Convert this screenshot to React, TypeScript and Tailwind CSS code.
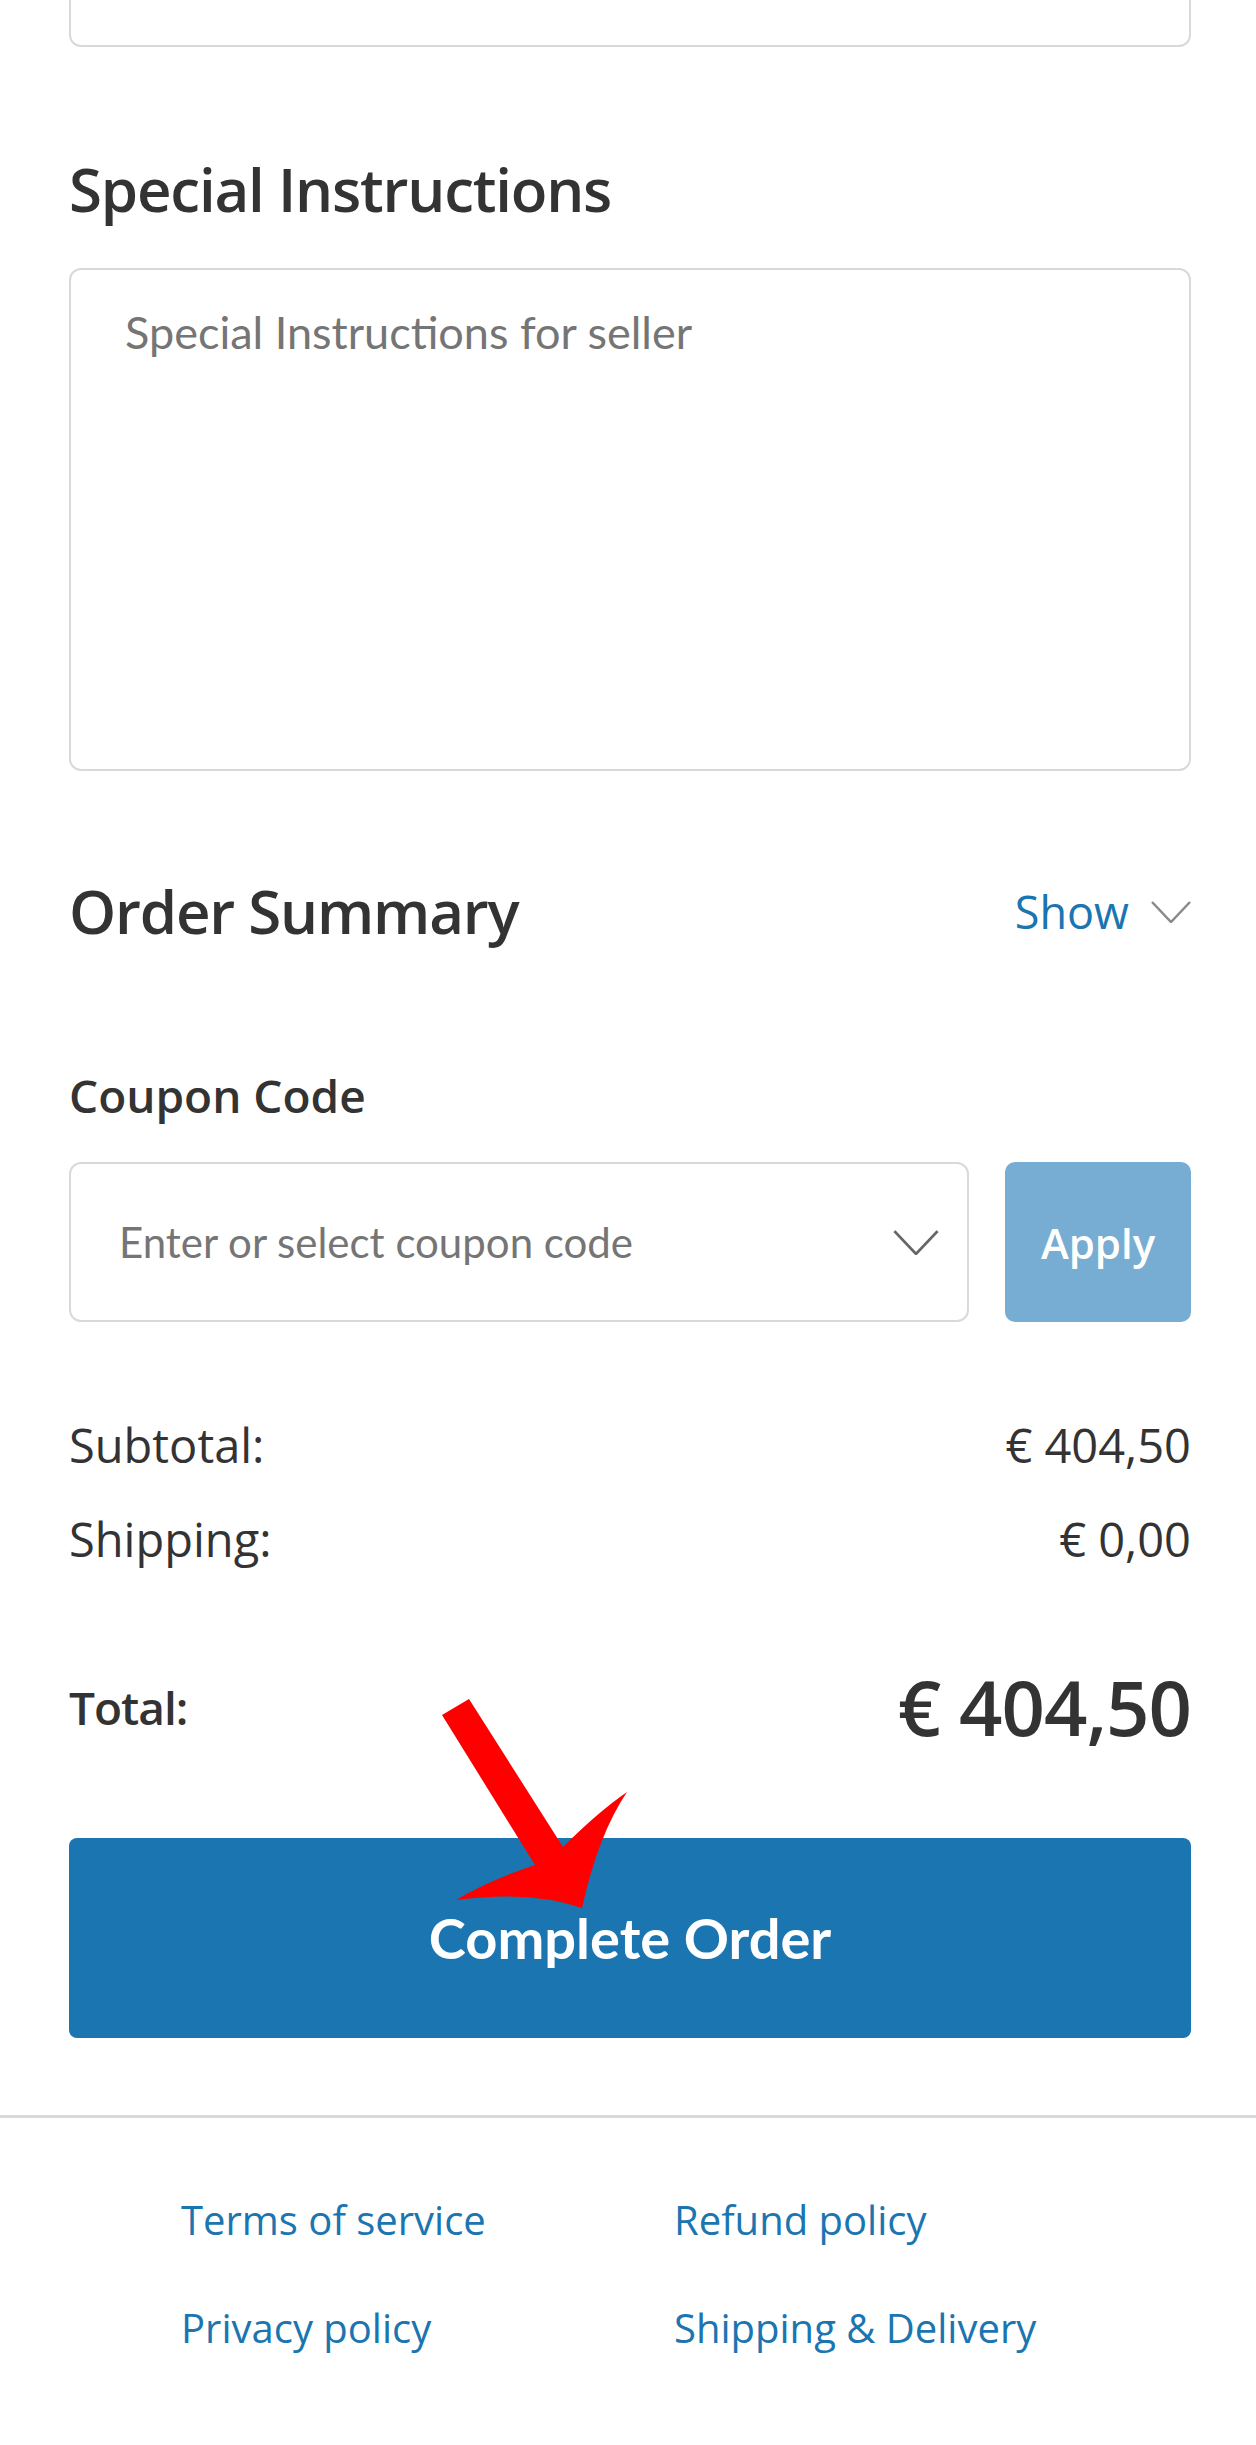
import { useState } from "react"

const FOOTER_LINKS = [
  ["Terms of service", "Refund policy"],
  ["Privacy policy", "Shipping & Delivery"],
]

function Chevron({ className }: { className?: string }) {
  return (
    <svg viewBox="0 0 40 22" fill="none" className={className} aria-hidden>
      <path d="M1 1 L20 21 L39 1" stroke="currentColor" strokeWidth="2.5" />
    </svg>
  )
}

export default function App() {
  const [notes, setNotes] = useState("")
  const [coupon, setCoupon] = useState("")

  return (
    <div className="relative min-h-[2445px] bg-white font-['Open_Sans',sans-serif] text-[#333333]">
      <div className="pl-[69px] pr-[65px]">
        {/* tail of the previous field */}
        <div className="h-[47px] rounded-b-[12px] border-2 border-t-0 border-[#d9d9d9]" />

        <h2 className="mt-[105px] text-[60px] font-semibold leading-[75px] tracking-[-1.2px]">
          Special Instructions
        </h2>
        <textarea
          value={notes}
          onChange={(e) => setNotes(e.target.value)}
          placeholder="Special Instructions for seller"
          className="mt-[41px] block h-[503px] w-full resize-none rounded-[12px] border-2 border-[#d9d9d9] px-[54px] pt-[33px] font-['Lato',sans-serif] text-[45px] leading-[58px] outline-none placeholder:text-[#757575]"
        />

        <div className="mt-[103px] flex items-center justify-between">
          <h2 className="text-[60px] font-semibold leading-[75px] tracking-[-1.2px]">Order Summary</h2>
          <button className="flex items-center gap-[22px] text-[45px] text-[#1a75b0]">
            Show
            <Chevron className="h-[22px] w-[40px] text-[#8a8a8a]" />
          </button>
        </div>

        <label className="mt-[117px] block text-[46px] font-semibold leading-[58px]">Coupon Code</label>
        <div className="mt-[38px] flex h-[160px] gap-[36px]">
          <div className="relative flex flex-1 items-center rounded-[12px] border-2 border-[#d9d9d9]">
            <input
              value={coupon}
              onChange={(e) => setCoupon(e.target.value)}
              placeholder="Enter or select coupon code"
              className="h-full w-full bg-transparent pl-[48px] pr-[90px] font-['Lato',sans-serif] text-[42px] outline-none placeholder:text-[#757575]"
            />
            <Chevron className="absolute right-[28px] h-[25px] w-[46px] text-[#666666]" />
          </div>
          <button className="w-[186px] rounded-[10px] bg-[#77acd3] text-[42px] font-semibold text-white">
            Apply
          </button>
        </div>

        <div className="mt-[76px] flex h-[94px] items-center justify-between text-[47px]">
          <span>Subtotal:</span>
          <span>€ 404,50</span>
        </div>
        <div className="flex h-[94px] items-center justify-between text-[47px]">
          <span>Shipping:</span>
          <span>€ 0,00</span>
        </div>

        <div className="mt-[74px] flex h-[94px] items-center justify-between">
          <span className="text-[46px] font-semibold tracking-[-1px]">Total:</span>
          <span className="text-[76px] font-semibold tracking-[-1px]">€ 404,50</span>
        </div>

        <button className="mt-[84px] flex h-[200px] w-full items-center justify-center rounded-[8px] bg-[#1a75b1] font-['Lato',sans-serif] text-[56px] font-bold text-white">
          Complete Order
        </button>
      </div>

      <div className="mt-[77px] h-[3px] bg-[#d9d9d9]" />

      <div className="mt-[48px] grid grid-cols-[493px_1fr] pl-[181px] text-[40px] text-[#1a75b0]">
        {FOOTER_LINKS.flat().map((l) => (
          <a key={l} href="#" className="flex h-[108px] items-center">
            {l}
          </a>
        ))}
      </div>

      {/* annotation arrow */}
      <svg className="pointer-events-none absolute left-0 top-0 h-[2445px] w-[1256px]" viewBox="0 0 1256 2445" aria-hidden>
        <path
          d="M442 1715 L469 1699 L563 1847 Q598 1812 627 1792 Q598 1835 582 1908 Q530 1890 456 1900 Q490 1880 535 1865 Z"
          fill="#ff0000"
        />
      </svg>
    </div>
  )
}
